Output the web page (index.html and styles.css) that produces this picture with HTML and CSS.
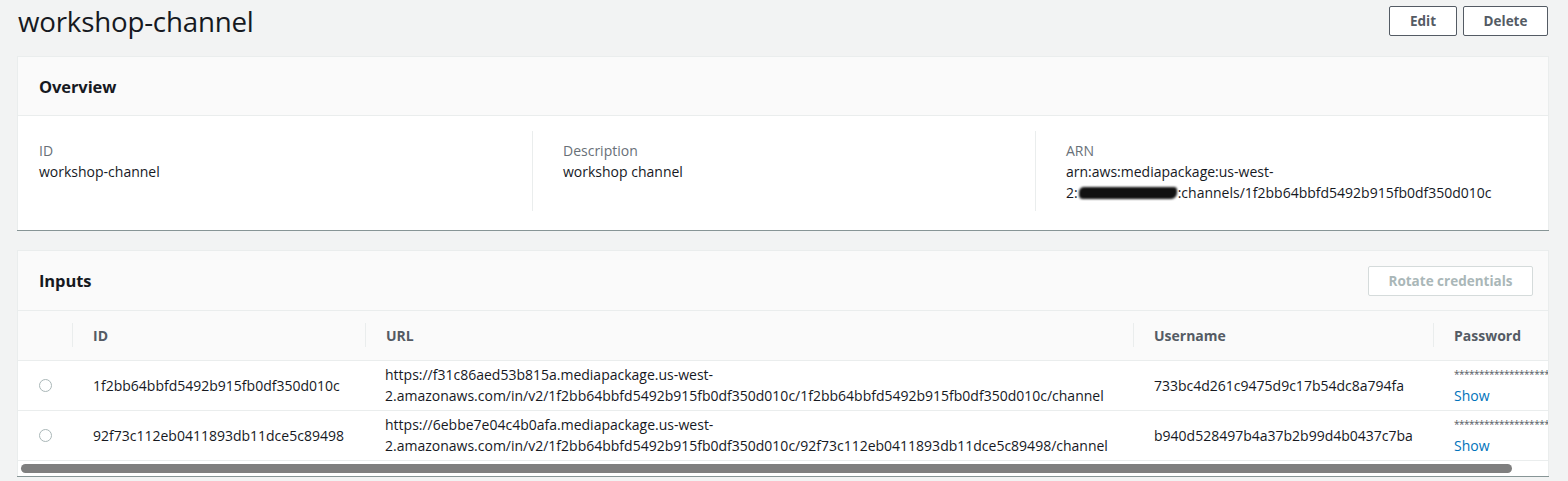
FILE: index.html
```html
<!DOCTYPE html>
<html lang="en">
<head>
<meta charset="utf-8">
<title>workshop-channel</title>
<link rel="stylesheet" href="styles.css">
</head>
<body>
<div class="page">
  <div class="page-header">
    <h1 class="title">workshop-channel</h1>
    <div class="actions">
      <button class="btn btn-edit">Edit</button>
      <button class="btn btn-delete">Delete</button>
    </div>
  </div>

  <section class="panel">
    <div class="panel-head"><h2>Overview</h2></div>
    <div class="overview-body">
      <div class="ov-col first">
        <div class="label">ID</div>
        <div class="value">workshop-channel</div>
      </div>
      <div class="ov-col">
        <div class="label">Description</div>
        <div class="value">workshop channel</div>
      </div>
      <div class="ov-col">
        <div class="label">ARN</div>
        <div class="value">arn:aws:mediapackage:us-west-<br>2:<span class="redact"></span>:channels/1f2bb64bbfd5492b915fb0df350d010c</div>
      </div>
    </div>
  </section>

  <section class="panel inputs">
    <div class="panel-head">
      <h2>Inputs</h2>
      <button class="btn btn-disabled">Rotate credentials</button>
    </div>
    <div class="table-wrap">
      <table class="table">
        <colgroup>
          <col class="c-sel"><col class="c-id"><col class="c-url"><col class="c-user"><col class="c-pass">
        </colgroup>
        <thead>
          <tr>
            <th></th>
            <th><span class="th-in">ID</span></th>
            <th><span class="th-in">URL</span></th>
            <th><span class="th-in">Username</span></th>
            <th><span class="th-in">Password</span></th>
          </tr>
        </thead>
        <tbody>
          <tr>
            <td class="sel"><span class="radio"></span></td>
            <td>1f2bb64bbfd5492b915fb0df350d010c</td>
            <td class="url">https://f31c86aed53b815a.mediapackage.us-west-<br>2.amazonaws.com/in/v2/1f2bb64bbfd5492b915fb0df350d010c/1f2bb64bbfd5492b915fb0df350d010c/channel</td>
            <td>733bc4d261c9475d9c17b54dc8a794fa</td>
            <td class="pass"><div class="stars">********************************</div><a class="show">Show</a></td>
          </tr>
          <tr>
            <td class="sel"><span class="radio"></span></td>
            <td>92f73c112eb0411893db11dce5c89498</td>
            <td class="url">https://6ebbe7e04c4b0afa.mediapackage.us-west-<br>2.amazonaws.com/in/v2/1f2bb64bbfd5492b915fb0df350d010c/92f73c112eb0411893db11dce5c89498/channel</td>
            <td>b940d528497b4a37b2b99d4b0437c7ba</td>
            <td class="pass"><div class="stars">********************************</div><a class="show">Show</a></td>
          </tr>
        </tbody>
      </table>
    </div>
    <div class="scrollbar"><div class="thumb"></div></div>
  </section>
</div>
</body>
</html>
```

FILE: styles.css
```css
* { box-sizing: border-box; }
html, body { margin: 0; padding: 0; }
body {
  background: #f2f3f3;
  font-family: "Open Sans", "Noto Sans", sans-serif;
  color: #16191f;
  font-size: 14px;
  width: 1568px;
  height: 481px;
  overflow: hidden;
}
.page { padding: 0 19px 0 17px; }

.page-header {
  height: 42px;
  display: flex;
  align-items: center;
  justify-content: space-between;
  margin-bottom: 14px;
}
.title {
  margin: 0 0 0 1px;
  font-size: 27.7px;
  font-weight: 400;
  line-height: 36px;
  color: #16191f;
  letter-spacing: -0.2px;
}
.actions { display: flex; gap: 6px; margin-right: 1px; }
.btn {
  font-family: inherit;
  font-size: 13.5px;
  font-weight: 700;
  height: 30px;
  background: #fff;
  border: 1px solid #545b64;
  border-radius: 2px;
  color: #545b64;
  padding: 0 19px;
  line-height: 28px;
}
.btn-edit { width: 68px; padding: 0; }
.btn-delete { width: 85px; padding: 0; }
.btn-disabled {
  border-color: #d5dbdb;
  color: #aab7b8;
  width: 165px;
  padding: 0;
}

.panel {
  background: #fff;
  border: 1px solid #eaeded;
  border-bottom: none;
  box-shadow: 0 1px 0 0 #879596;
  margin-bottom: 20px;
}
.panel-head {
  background: #fafafa;
  height: 59px;
  border-bottom: 1px solid #eaeded;
  display: flex;
  align-items: center;
  justify-content: space-between;
  padding: 0 15px 0 21px;
}
.panel-head h2 {
  margin: 0;
  font-size: 16.5px;
  font-weight: 700;
  color: #16191f;
  letter-spacing: -0.1px;
}

.overview-body {
  display: grid;
  grid-template-columns: 493px 503px 1fr;
  padding: 15px 20px 18px 21px;
  height: 114px;
}
.ov-col { height: 80px; padding-top: 10px; }
.ov-col + .ov-col { border-left: 1px solid #eaeded; padding-left: 30px; }
.label { color: #687078; line-height: 20px; }
.value { color: #16191f; line-height: 21px; }
.redact {
  display: inline-block;
  width: 98px;
  height: 12px;
  vertical-align: -1px;
  background: #111;
  border-radius: 5px 3px 6px 4px;
  filter: blur(1.2px);
  margin: 0 1px;
}

.inputs { margin-bottom: 0; }
.inputs .panel-head { height: 60px; }
.table-wrap { overflow: hidden; }
.table {
  border-collapse: collapse;
  table-layout: fixed;
  width: 1640px;
  font-size: 14px;
}
.c-sel { width: 54px; }
.c-id { width: 293px; }
.c-url { width: 768px; }
.c-user { width: 300px; }
.c-pass { width: 225px; }

.table th {
  background: #fafafa;
  height: 49px;
  text-align: left;
  font-weight: 700;
  color: #545b64;
  padding: 0;
  border-bottom: 1px solid #eaeded;
}
.th-in {
  display: flex;
  align-items: center;
  height: 24px;
  border-left: 1px solid #eaeded;
  padding-left: 20px;
}
.table td {
  height: 50px;
  padding: 0 0 0 21px;
  border-bottom: 1px solid #eaeded;
  color: #16191f;
  vertical-align: middle;
  white-space: nowrap;
  line-height: 21px;
}
.table td.url { padding-left: 20px; }
.table td.pass { padding: 6px 0 0 21px; vertical-align: top; }
.radio {
  display: block;
  width: 13px;
  height: 13px;
  border: 1px solid #aab7b8;
  border-radius: 50%;
  background: #fff;
  margin-top: 1px;
}
.stars { font-size: 10px; line-height: 14px; color: #545b64; letter-spacing: -0.5px; }
.show { color: #0073bb; line-height: 22px; margin-top: 4px; display: block; }

.scrollbar {
  height: 16px;
  padding: 3px 36px 3px 3px;
  border-top: 1px solid #eaeded;
  margin-top: -1px;
}
.thumb {
  height: 9px;
  background: #7f7f7f;
  border-radius: 5px;
}
```
